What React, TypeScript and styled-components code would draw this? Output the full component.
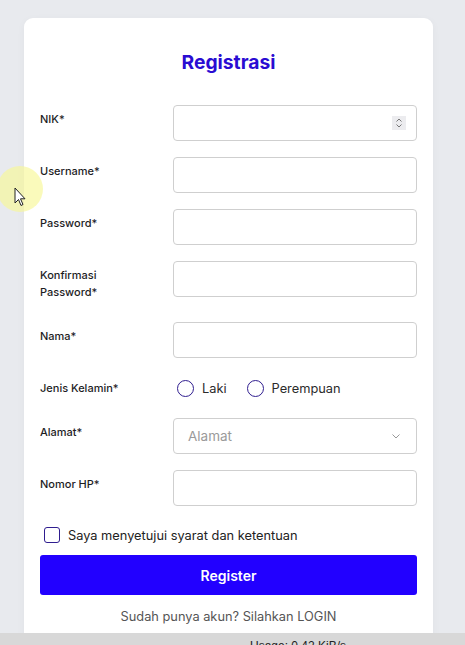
import React from "react";
import styled, { createGlobalStyle } from "styled-components";

const Global = createGlobalStyle`
  html, body { margin: 0; padding: 0; }
  body {
    background: #e8eaee;
    font-family: Inter, "Noto Sans", sans-serif;
    overflow: hidden;
  }
`;

const Page = styled.div`
  min-height: 645px;
  padding: 18px 32px 0 24px;
  box-sizing: border-box;
`;

const Card = styled.div`
  width: 409px;
  background: #ffffff;
  border-radius: 9px;
  box-shadow: 0 2px 8px rgba(0, 0, 0, 0.04);
  padding: 32px 16px 40px;
  box-sizing: border-box;
`;

const Title = styled.h1`
  margin: 0 0 31px;
  text-align: center;
  font-size: 19.3px;
  line-height: 24px;
  font-weight: 700;
  color: #2a0cd2;
`;

const Form = styled.form`
  display: flex;
  flex-direction: column;
  gap: 16px;
`;

const Row = styled.div`
  display: grid;
  grid-template-columns: 133px 1fr;
  align-items: start;
`;

const Label = styled.label`
  padding: 6px 0 5px;
  font-size: 11px;
  line-height: 17px;
  font-weight: 500;
  color: #1d1d1f;
`;

const Field = styled.div`
  position: relative;
`;

const Input = styled.input`
  width: 100%;
  height: 36px;
  box-sizing: border-box;
  border: 1px solid #cfcfcf;
  border-radius: 4px;
  padding: 0 14px;
  font-family: inherit;
  font-size: 13px;
  outline: none;
  background: #fff;
`;

const Spinner = styled.div`
  position: absolute;
  right: 11px;
  top: 11px;
  width: 14px;
  height: 14px;
  background: #ececef;
  display: flex;
  align-items: center;
  justify-content: center;
`;

const Radios = styled.div`
  display: flex;
  align-items: center;
  height: 28px;
  gap: 20px;
  padding-left: 4px;
`;

const RadioItem = styled.label`
  display: flex;
  align-items: center;
  gap: 8px;
  font-size: 12.8px;
  color: #2b2b2b;
`;

const Circle = styled.span`
  width: 17px;
  height: 17px;
  box-sizing: border-box;
  border: 1.5px solid #2f1d8f;
  border-radius: 50%;
`;

const Select = styled.div`
  height: 36px;
  box-sizing: border-box;
  border: 1px solid #cfcfcf;
  border-radius: 4px;
  padding: 0 16px 0 14px;
  display: flex;
  align-items: center;
  justify-content: space-between;
  font-size: 13.5px;
  color: #9a9a9a;
`;

const Agree = styled.label`
  display: flex;
  align-items: center;
  gap: 8px;
  margin-top: 5px;
  padding-left: 4px;
  font-size: 12.8px;
  color: #222;
`;

const Box = styled.span`
  width: 16px;
  height: 16px;
  box-sizing: border-box;
  border: 1.5px solid #2f1d8f;
  border-radius: 3px;
`;

const Button = styled.button`
  margin-top: -4px;
  height: 40px;
  border: none;
  border-radius: 3px;
  background: #2200ff;
  color: #fff;
  font-family: inherit;
  font-size: 14px;
  font-weight: 600;
`;

const Footer = styled.p`
  margin: -2px 0 0;
  text-align: center;
  font-size: 12.8px;
  color: #555;
`;

const StatusBar = styled.div`
  position: fixed;
  left: 0;
  right: 0;
  bottom: 0;
  height: 12px;
  background: #d8d8d8;
  overflow: hidden;
  font-family: "Liberation Sans", Arial, sans-serif;
  font-size: 12px;
  color: #222;
  line-height: 12px;
`;

const StatusText = styled.span`
  position: absolute;
  left: 250px;
  top: 7px;
`;

const Cursor = styled.div`
  position: fixed;
  left: 0;
  top: 166px;
  width: 44px;
  height: 48px;
  pointer-events: none;
`;

const Halo = styled.div`
  position: absolute;
  left: -3px;
  top: 0;
  width: 46px;
  height: 46px;
  border-radius: 50%;
  background: rgba(248, 248, 150, 0.65);
`;

const Arrow = styled.svg`
  position: absolute;
  left: 14px;
  top: 21px;
`;

const rows = ["NIK*", "Username*", "Password*"];

export default function App() {
  return (
    <>
      <Global />
      <Page>
        <Card>
          <Title>Registrasi</Title>
          <Form onSubmit={(e) => e.preventDefault()}>
            {rows.map((r, i) => (
              <Row key={r}>
                <Label>{r}</Label>
                <Field>
                  <Input type={i === 2 ? "password" : "text"} />
                  {i === 0 && (
                    <Spinner>
                      <svg width="8" height="12" viewBox="0 0 8 12">
                        <path d="M1.5 4.5 L4 2 L6.5 4.5 M1.5 7.5 L4 10 L6.5 7.5" fill="none" stroke="#777" strokeWidth="1" />
                      </svg>
                    </Spinner>
                  )}
                </Field>
              </Row>
            ))}
            <Row>
              <Label>
                Konfirmasi
                <br />
                Password*
              </Label>
              <Field>
                <Input type="password" />
              </Field>
            </Row>
            <Row>
              <Label>Nama*</Label>
              <Field>
                <Input type="text" />
              </Field>
            </Row>
            <Row>
              <Label>Jenis Kelamin*</Label>
              <Radios>
                <RadioItem>
                  <Circle />
                  Laki
                </RadioItem>
                <RadioItem>
                  <Circle />
                  Perempuan
                </RadioItem>
              </Radios>
            </Row>
            <Row>
              <Label>Alamat*</Label>
              <Select>
                <span>Alamat</span>
                <svg width="8" height="5" viewBox="0 0 8 5">
                  <path d="M0.5 0.5 L4 4 L7.5 0.5" fill="none" stroke="#999" strokeWidth="1" />
                </svg>
              </Select>
            </Row>
            <Row>
              <Label>Nomor HP*</Label>
              <Field>
                <Input type="text" />
              </Field>
            </Row>
            <Agree>
              <Box />
              Saya menyetujui syarat dan ketentuan
            </Agree>
            <Button type="submit">Register</Button>
            <Footer>Sudah punya akun? Silahkan LOGIN</Footer>
          </Form>
        </Card>
      </Page>
      <StatusBar>
        <StatusText>Usage: 0.42 KiB/s</StatusText>
      </StatusBar>
      <Cursor>
        <Halo />
        <Arrow width="12" height="20" viewBox="0 0 12 20">
          <path d="M1 1 L1 16 L4.5 12.5 L7 18.5 L9 17.5 L6.5 11.8 L11 11.8 Z" fill="#fff" stroke="#222" strokeWidth="1" strokeLinejoin="round" />
        </Arrow>
      </Cursor>
    </>
  );
}
